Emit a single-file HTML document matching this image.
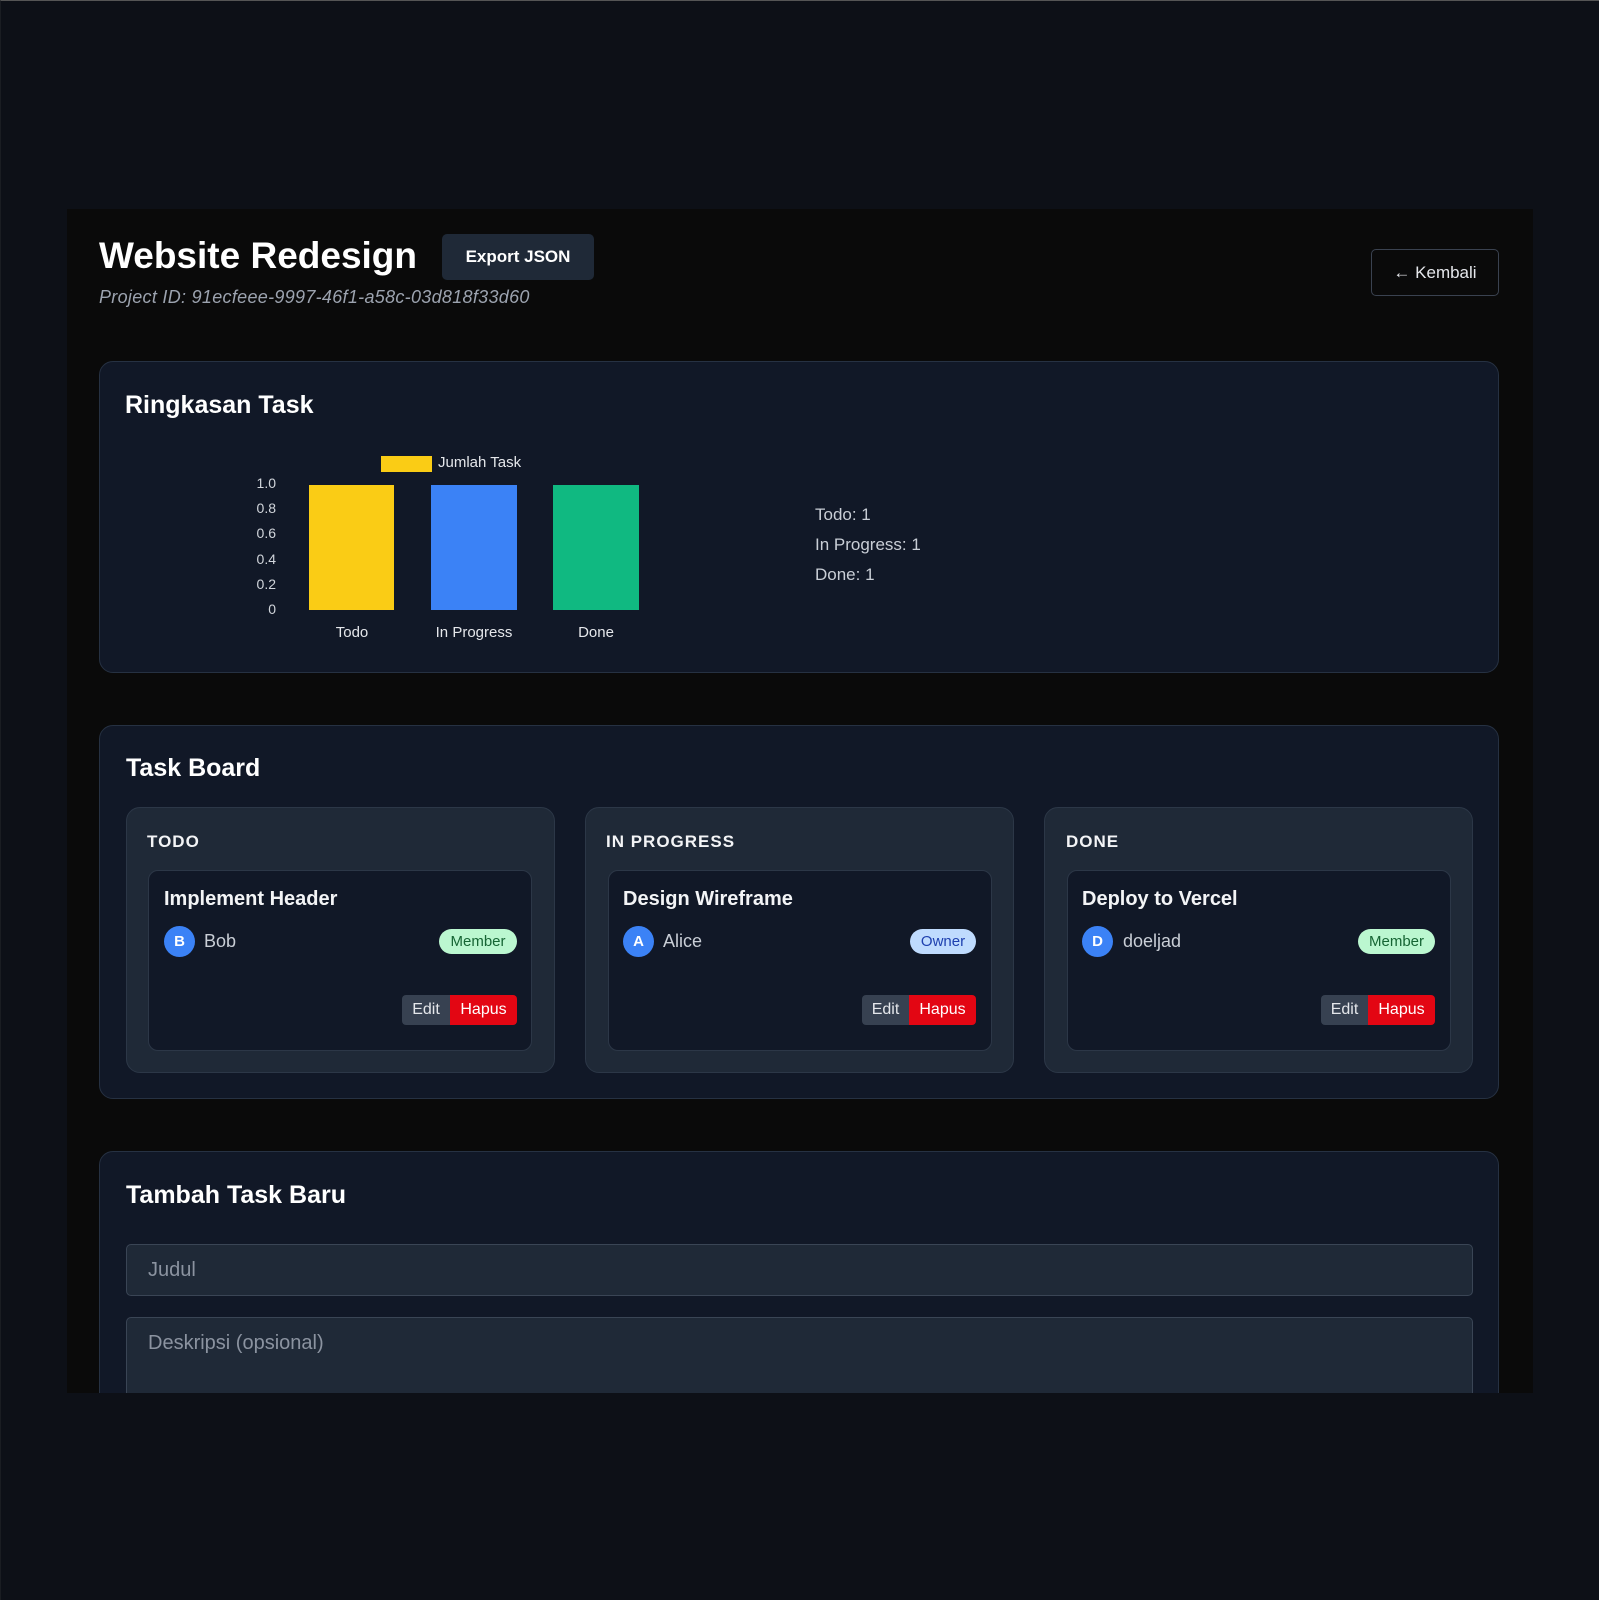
<!DOCTYPE html>
<html><head><meta charset="utf-8">
<style>
*{box-sizing:border-box;margin:0;padding:0}
body{width:1599px;height:1600px;background:#0d1017;font-family:"Liberation Sans",sans-serif;position:relative;overflow:hidden;border-top:1px solid #555;border-left:1px solid #1a1d22}
.a{position:absolute}
.page{left:66px;top:208px;width:1466px;height:1184px;background:#0a0a0a;overflow:hidden}
.card{background:#111827;border:1px solid #263142;border-radius:14px}
.h2{color:#fff;font-weight:bold;font-size:25px}
.col{background:#1f2937;border:1px solid #2c3747;border-radius:14px}
.tc{background:#111827;border:1px solid #2c3747;border-radius:10px}
.ch{color:#f3f4f6;font-weight:bold;font-size:17px;letter-spacing:1px}
.tt{color:#f3f4f6;font-weight:bold;font-size:20px}
.av{width:31px;height:31px;border-radius:50%;background:#3b82f6;color:#fff;font-weight:bold;font-size:15px;text-align:center;line-height:31px}
.nm{color:#c9ced6;font-size:18px}
.bd{height:25px;border-radius:13px;font-size:15px;text-align:center;line-height:25px}
.mem{background:#bbf7d0;color:#166534}
.own{background:#bfdbfe;color:#1e40af}
.ed{background:#374151;color:#e5e7eb;font-size:16px;height:30px;line-height:30px;text-align:center;border-radius:4px 0 0 4px}
.hp{background:#e30613;color:#fff;font-size:16px;height:30px;line-height:30px;text-align:center;border-radius:0 4px 4px 0}
.yl{color:#d1d5db;font-size:14px;text-align:right;width:30px}
.xl{color:#e5e7eb;font-size:15px;text-align:center;width:120px}
.st{color:#c9ced6;font-size:17px}
.inp{background:#1f2937;border:1px solid #3a4555;border-radius:5px;color:#8b93a0;font-size:20px;padding-left:21px}
</style></head><body>
<div class="a page"></div>
<div class="a" style="left:98px;top:234px;color:#fff;font-weight:bold;font-size:37px">Website Redesign</div>
<div class="a" style="left:441px;top:233px;width:152px;height:46px;background:#1f2937;border-radius:5px;color:#fff;font-weight:bold;font-size:17px;text-align:center;line-height:46px">Export JSON</div>
<div class="a" style="left:98px;top:286px;color:#9ca3af;font-size:18px;letter-spacing:0.3px;font-style:italic">Project ID: 91ecfeee-9997-46f1-a58c-03d818f33d60</div>
<div class="a" style="left:1370px;top:248px;width:128px;height:47px;border:1px solid #3a4250;border-radius:5px;color:#e5e7eb;font-size:17px;text-align:center;line-height:45px">← Kembali</div>

<div class="a card" style="left:98px;top:360px;width:1400px;height:312px"></div>
<div class="a h2" style="left:124px;top:390px">Ringkasan Task</div>
<div class="a" style="left:380px;top:455px;width:51px;height:16px;background:#facc15"></div>
<div class="a" style="left:437px;top:453px;color:#e5e7eb;font-size:15px">Jumlah Task</div>
<div class="a yl" style="left:245px;top:474px">1.0</div>
<div class="a yl" style="left:245px;top:499px">0.8</div>
<div class="a yl" style="left:245px;top:524px">0.6</div>
<div class="a yl" style="left:245px;top:550px">0.4</div>
<div class="a yl" style="left:245px;top:575px">0.2</div>
<div class="a yl" style="left:245px;top:600px">0</div>
<div class="a" style="left:308px;top:484px;width:85px;height:125px;background:#facc15"></div>
<div class="a" style="left:430px;top:484px;width:86px;height:125px;background:#3b82f6"></div>
<div class="a" style="left:552px;top:484px;width:86px;height:125px;background:#10b981"></div>
<div class="a xl" style="left:291px;top:623px">Todo</div>
<div class="a xl" style="left:413px;top:623px">In Progress</div>
<div class="a xl" style="left:535px;top:623px">Done</div>
<div class="a st" style="left:814px;top:504px">Todo: 1</div>
<div class="a st" style="left:814px;top:534px">In Progress: 1</div>
<div class="a st" style="left:814px;top:564px">Done: 1</div>

<div class="a card" style="left:98px;top:724px;width:1400px;height:374px"></div>
<div class="a h2" style="left:125px;top:753px">Task Board</div>

<div class="a col" style="left:125px;top:806px;width:429px;height:266px"></div>
<div class="a ch" style="left:146px;top:831px">TODO</div>
<div class="a tc" style="left:147px;top:869px;width:384px;height:181px"></div>
<div class="a tt" style="left:163px;top:887px">Implement Header</div>
<div class="a av" style="left:163px;top:925px">B</div>
<div class="a nm" style="left:203px;top:930px">Bob</div>
<div class="a bd mem" style="left:438px;top:928px;width:78px">Member</div>
<div class="a ed" style="left:401px;top:994px;width:48px">Edit</div>
<div class="a hp" style="left:449px;top:994px;width:67px">Hapus</div>

<div class="a col" style="left:584px;top:806px;width:429px;height:266px"></div>
<div class="a ch" style="left:605px;top:831px">IN PROGRESS</div>
<div class="a tc" style="left:607px;top:869px;width:384px;height:181px"></div>
<div class="a tt" style="left:622px;top:887px">Design Wireframe</div>
<div class="a av" style="left:622px;top:925px">A</div>
<div class="a nm" style="left:662px;top:930px">Alice</div>
<div class="a bd own" style="left:909px;top:928px;width:66px">Owner</div>
<div class="a ed" style="left:861px;top:994px;width:47px">Edit</div>
<div class="a hp" style="left:908px;top:994px;width:67px">Hapus</div>

<div class="a col" style="left:1043px;top:806px;width:429px;height:266px"></div>
<div class="a ch" style="left:1065px;top:831px">DONE</div>
<div class="a tc" style="left:1066px;top:869px;width:384px;height:181px"></div>
<div class="a tt" style="left:1081px;top:887px">Deploy to Vercel</div>
<div class="a av" style="left:1081px;top:925px">D</div>
<div class="a nm" style="left:1122px;top:930px">doeljad</div>
<div class="a bd mem" style="left:1357px;top:928px;width:77px">Member</div>
<div class="a ed" style="left:1320px;top:994px;width:47px">Edit</div>
<div class="a hp" style="left:1367px;top:994px;width:67px">Hapus</div>

<div class="a" style="left:66px;top:1150px;width:1466px;height:242px;overflow:hidden">
  <div class="a card" style="left:32px;top:0;width:1400px;height:400px"></div>
  <div class="a h2" style="left:59px;top:30px">Tambah Task Baru</div>
  <div class="a inp" style="left:59px;top:93px;width:1347px;height:52px;line-height:50px">Judul</div>
  <div class="a inp" style="left:59px;top:166px;width:1347px;height:120px;padding-top:14px">Deskripsi (opsional)</div>
</div>
</body></html>
